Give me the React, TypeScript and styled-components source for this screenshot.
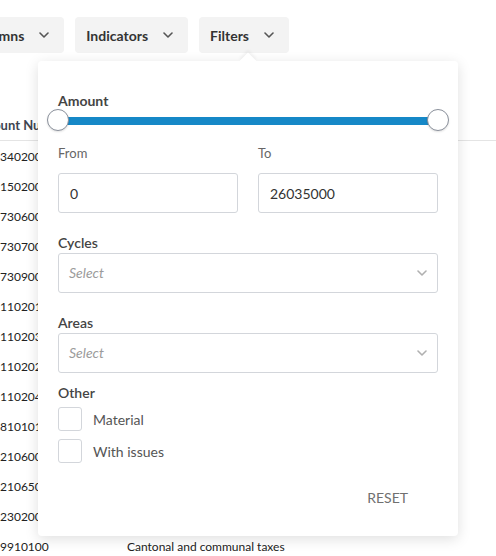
import styled, { createGlobalStyle } from "styled-components";

const GlobalStyle = createGlobalStyle`
  body {
    margin: 0;
    background: #ffffff;
    font-family: Lato, "Open Sans", "Liberation Sans", sans-serif;
    overflow: hidden;
  }
`;

const rows = [
  { code: "3402000", label: "" },
  { code: "1502000", label: "" },
  { code: "7306000", label: "" },
  { code: "7307000", label: "" },
  { code: "7309000", label: "" },
  { code: "1102010", label: "" },
  { code: "1102030", label: "" },
  { code: "1102020", label: "" },
  { code: "1102040", label: "" },
  { code: "8101010", label: "" },
  { code: "2106000", label: "" },
  { code: "2106500", label: "" },
  { code: "2302000", label: "" },
  { code: "9910100", label: "Cantonal and communal taxes" },
];

const Chevron = ({ color = "#555", size = 10 }: { color?: string; size?: number }) => (
  <svg width={size} height={size * 0.6} viewBox="0 0 10 6" fill="none">
    <path d="M1 1l4 4 4-4" stroke={color} strokeWidth="1.6" strokeLinecap="round" strokeLinejoin="round" />
  </svg>
);

const App = () => {
  return (
    <Page>
      <GlobalStyle />
      <Toolbar>
        <ToolButton>
          Columns
          <Chevron />
        </ToolButton>
        <ToolButton>
          Indicators
          <Chevron />
        </ToolButton>
        <ToolButton>
          Filters
          <Chevron />
        </ToolButton>
      </Toolbar>

      <Table>
        <HeadRow>
          <HeadCell>Account Number</HeadCell>
          <HeadCell>Description</HeadCell>
        </HeadRow>
        {rows.map((row) => (
          <BodyRow key={row.code}>
            <CodeCell>{row.code}</CodeCell>
            <TextCell>{row.label}</TextCell>
          </BodyRow>
        ))}
      </Table>

      <Popover>
        <SectionTitle $strong>Amount</SectionTitle>
        <Slider>
          <Track />
          <Thumb />
          <Thumb />
        </Slider>

        <RangeGrid>
          <Field>
            <FieldLabel>From</FieldLabel>
            <TextInput>0</TextInput>
          </Field>
          <Field>
            <FieldLabel>To</FieldLabel>
            <TextInput>26035000</TextInput>
          </Field>
        </RangeGrid>

        <SelectBlock>
          <SectionTitle>Cycles</SectionTitle>
          <SelectBox>
            <Placeholder>Select</Placeholder>
            <Chevron color="#b0b0b0" />
          </SelectBox>
        </SelectBlock>

        <SelectBlock>
          <SectionTitle>Areas</SectionTitle>
          <SelectBox>
            <Placeholder>Select</Placeholder>
            <Chevron color="#b0b0b0" />
          </SelectBox>
        </SelectBlock>

        <OtherBlock>
          <SectionTitle>Other</SectionTitle>
          <CheckList>
            <CheckRow>
              <CheckBox />
              Material
            </CheckRow>
            <CheckRow>
              <CheckBox />
              With issues
            </CheckRow>
          </CheckList>
        </OtherBlock>

        <Footer>
          <ResetButton>RESET</ResetButton>
        </Footer>
      </Popover>
    </Page>
  );
};

const Page = styled.div`
  position: relative;
  width: 496px;
  height: 556px;
  overflow: hidden;
`;

const Toolbar = styled.div`
  display: flex;
  gap: 11px;
  margin-left: -41px;
  padding-top: 17px;
`;

const ToolButton = styled.div`
  display: flex;
  align-items: center;
  gap: 15px;
  height: 36px;
  padding: 0 15px 0 11px;
  background: #f3f3f3;
  border-radius: 4px;
  font-size: 14px;
  font-weight: 700;
  color: #333;
  white-space: nowrap;
`;

const Table = styled.div`
  margin-top: 57px;
  margin-left: -28px;
  color: #222;
`;

const HeadRow = styled.div`
  display: flex;
  align-items: center;
  height: 30px;
  border-bottom: 1px solid #e4e4e4;
`;

const HeadCell = styled.div`
  width: 155px;
  font-size: 13px;
  font-weight: 700;
  color: #3d4450;
  white-space: nowrap;
`;

const BodyRow = styled.div`
  display: flex;
  align-items: center;
  height: 30px;
  font-size: 12px;
`;

const CodeCell = styled.div`
  width: 155px;
  padding-left: 28px;
  box-sizing: border-box;
`;

const TextCell = styled.div`
  white-space: nowrap;
`;

const Popover = styled.div`
  position: absolute;
  left: 38px;
  top: 61px;
  width: 420px;
  box-sizing: border-box;
  padding: 32px 20px 30px;
  background: #fff;
  border-radius: 4px;
  box-shadow: 0 3px 14px rgba(0, 0, 0, 0.13);

  &::before {
    content: "";
    position: absolute;
    left: 204px;
    top: -6px;
    width: 12px;
    height: 12px;
    background: #fff;
    transform: rotate(45deg);
    box-shadow: -2px -2px 3px rgba(0, 0, 0, 0.05);
  }
`;

const SectionTitle = styled.div<{ $strong?: boolean }>`
  font-size: 14px;
  font-weight: ${(p) => (p.$strong ? 700 : 600)};
  line-height: 16px;
  color: #444;
`;

const Slider = styled.div`
  position: relative;
  display: flex;
  align-items: center;
  justify-content: space-between;
  height: 22px;
  margin: 0 -11px;
`;

const Track = styled.div`
  position: absolute;
  left: 11px;
  right: 11px;
  top: 8px;
  height: 8px;
  background: #1688c7;
`;

const Thumb = styled.div`
  position: relative;
  width: 20px;
  height: 20px;
  border: 1px solid #8a909b;
  border-radius: 50%;
  background: #fff;
  box-shadow: 0 1px 2px rgba(0, 0, 0, 0.12);
`;

const RangeGrid = styled.div`
  display: grid;
  grid-template-columns: 1fr 1fr;
  gap: 20px;
  margin-top: 14px;
`;

const Field = styled.div`
  display: flex;
  flex-direction: column;
  gap: 12px;
`;

const FieldLabel = styled.div`
  font-size: 13px;
  line-height: 16px;
  color: #666;
`;

const TextInput = styled.div`
  display: flex;
  align-items: center;
  height: 40px;
  box-sizing: border-box;
  padding: 0 11px;
  border: 1px solid #d3d6db;
  border-radius: 3px;
  font-size: 14px;
  color: #333;
`;

const SelectBlock = styled.div`
  display: flex;
  flex-direction: column;
  gap: 2px;
  margin-top: 22px;
`;

const SelectBox = styled.div`
  display: flex;
  align-items: center;
  justify-content: space-between;
  height: 40px;
  box-sizing: border-box;
  padding: 0 10px 1px 10px;
  border: 1px solid #d3d6db;
  border-radius: 3px;
`;

const Placeholder = styled.span`
  font-size: 14px;
  font-style: italic;
  color: #9b9b9b;
`;

const OtherBlock = styled.div`
  margin-top: 12px;
`;

const CheckList = styled.div`
  display: flex;
  flex-direction: column;
  gap: 8px;
  margin-top: 6px;
`;

const CheckRow = styled.label`
  display: flex;
  align-items: center;
  gap: 11px;
  font-size: 14px;
  color: #555;
`;

const CheckBox = styled.span`
  width: 24px;
  height: 24px;
  box-sizing: border-box;
  border: 1px solid #d3d6db;
  border-radius: 3px;
`;

const Footer = styled.div`
  display: flex;
  justify-content: flex-end;
  margin-top: 27px;
  padding-right: 30px;
`;

const ResetButton = styled.div`
  font-size: 14px;
  line-height: 16px;
  color: #707070;
`;

export default App;
